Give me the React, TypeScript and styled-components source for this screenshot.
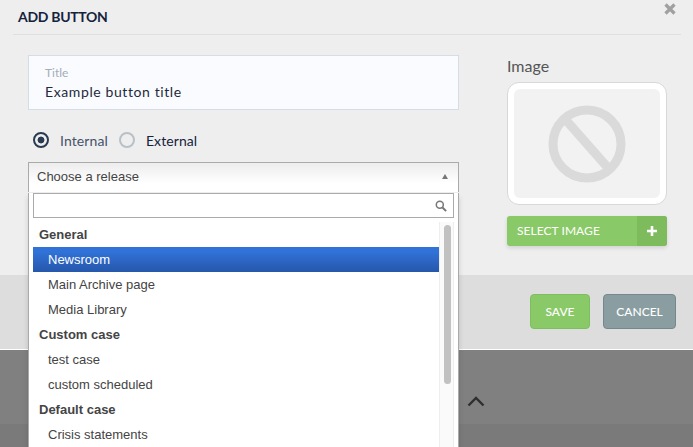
import React from 'react';
import styled, {createGlobalStyle} from 'styled-components';

type OptionType = {
  label: string
  kind: 'group' | 'item'
  active?: boolean
}

const options: Array<OptionType> = [
  {label: 'General', kind: 'group'},
  {label: 'Newsroom', kind: 'item', active: true},
  {label: 'Main Archive page', kind: 'item'},
  {label: 'Media Library', kind: 'item'},
  {label: 'Custom case', kind: 'group'},
  {label: 'test case', kind: 'item'},
  {label: 'custom scheduled', kind: 'item'},
  {label: 'Default case', kind: 'group'},
  {label: 'Crisis statements', kind: 'item'},
];

const App = () => {
  const optionsElements = options.map((o) => (
    <Option key={o.label} $kind={o.kind} $active={!!o.active}>{o.label}</Option>
  ));

  return (
    <Page>
      <GlobalStyle/>
      <Modal>
        <Header>
          <h1>ADD BUTTON</h1>
          <CloseIcon viewBox="0 0 12 12">
            <path d="M1.5 1.5l9 9M10.5 1.5l-9 9" stroke="#a0a0a0" strokeWidth="3.2" fill="none"/>
          </CloseIcon>
        </Header>
        <Body>
          <FormColumn>
            <TitleField>
              <small>Title</small>
              <span>Example button title</span>
            </TitleField>
            <RadioRow>
              <Radio $checked/>
              <RadioLabel $checked>Internal</RadioLabel>
              <Radio/>
              <RadioLabel>External</RadioLabel>
            </RadioRow>
            <SelectBox>
              <SelectHead>
                <span>Choose a release</span>
                <Caret/>
              </SelectHead>
              <Dropdown>
                <SearchBox>
                  <SearchIcon viewBox="0 0 12 12">
                    <circle cx="4.8" cy="4.8" r="3.5" stroke="#777" strokeWidth="1.5" fill="none"/>
                    <path d="M7.5 7.5l3.6 3.6" stroke="#777" strokeWidth="2" fill="none"/>
                  </SearchIcon>
                </SearchBox>
                <ListWrap>
                  <List>{optionsElements}</List>
                  <Scrollbar><Thumb/></Scrollbar>
                </ListWrap>
              </Dropdown>
            </SelectBox>
          </FormColumn>
          <ImageColumn>
            <ImageLabel>Image</ImageLabel>
            <ImageFrame>
              <ImageInner>
                <svg width="78" height="78" viewBox="0 0 78 78">
                  <circle cx="39" cy="39" r="34" stroke="#dadada" strokeWidth="9" fill="none"/>
                  <path d="M17 14l44 50" stroke="#dadada" strokeWidth="9" fill="none"/>
                </svg>
              </ImageInner>
            </ImageFrame>
            <SelectImageButton>
              <span>SELECT IMAGE</span>
              <PlusCell>
                <svg width="12" height="12" viewBox="0 0 12 12">
                  <path d="M6 1v10M1 6h10" stroke="#fff" strokeWidth="2.6" fill="none"/>
                </svg>
              </PlusCell>
            </SelectImageButton>
          </ImageColumn>
        </Body>
        <Footer>
          <FooterButton $variant="save">SAVE</FooterButton>
          <FooterButton $variant="cancel">CANCEL</FooterButton>
        </Footer>
      </Modal>
      <Backdrop>
        <svg width="18" height="11" viewBox="0 0 18 11">
          <path d="M1.5 9.5L9 2l7.5 7.5" stroke="#2f2f2f" strokeWidth="2.4" fill="none"/>
        </svg>
      </Backdrop>
      <BackdropBottom/>
    </Page>
  );
};

export default App;

const GlobalStyle = createGlobalStyle`
    html, body {
        margin: 0;
        padding: 0;
        overflow: hidden;
    }

    * {
        box-sizing: border-box;
    }
`

const Page = styled.div`
    width: 693px;
    height: 447px;
    overflow: hidden;
    font-family: Lato, "Liberation Sans", sans-serif;
    display: flex;
    flex-direction: column;
`

const Modal = styled.div`
    background: #eeeeee;
`

const Header = styled.div`
    height: 35px;
    margin: 0 12px 0 13px;
    padding: 0 5px;
    border-bottom: 1px solid #dfdfdf;
    display: flex;
    justify-content: space-between;

    h1 {
        margin: 8px 0 0;
        font-size: 14px;
        line-height: 17px;
        font-weight: 700;
        letter-spacing: -0.3px;
        color: #14233c;
    }
`

const CloseIcon = styled.svg`
    width: 12px;
    height: 12px;
    margin: 3px 0 0;
`

const Body = styled.div`
    height: 240px;
    padding: 20px 26px 0 28px;
    display: flex;
    justify-content: space-between;
`

const FormColumn = styled.div`
    width: 431px;
`

const TitleField = styled.div`
    height: 55px;
    padding: 10px 16px 0;
    background: #fafbff;
    border: 1px solid #d5dce6;
    display: flex;
    flex-direction: column;

    small {
        font-size: 12px;
        line-height: 14px;
        color: #a5acb8;
    }

    span {
        margin-top: 3px;
        font-size: 14px;
        line-height: 17px;
        letter-spacing: 0.6px;
        color: #1f2a3a;
    }
`

const RadioRow = styled.div`
    height: 18px;
    margin: 21px 0 0 5px;
    display: flex;
    align-items: center;
`

const Radio = styled.span<{ $checked?: boolean }>`
    width: 16px;
    height: 16px;
    border-radius: 50%;
    border: 2px solid ${p => p.$checked ? '#2a3a52' : '#b9c0c8'};
    background: ${p => p.$checked ? 'radial-gradient(circle, #2a3a52 0 3px, transparent 3.8px)' : 'transparent'};
`

const RadioLabel = styled.span<{ $checked?: boolean }>`
    margin: 1px ${p => p.$checked ? '11px' : '0'} 0 11px;
    font-size: 14px;
    letter-spacing: 0.1px;
    color: ${p => p.$checked ? '#44526a' : '#14233c'};
`

const SelectBox = styled.div`
    position: relative;
    margin-top: 13px;
    height: 30px;
    border: 1px solid #aaaaaa;
    border-bottom: none;
    background: linear-gradient(#eeeeee 5%, #ffffff 70%);
    z-index: 2;
`

const SelectHead = styled.div`
    height: 30px;
    padding: 0 10px 0 8px;
    display: flex;
    align-items: center;
    justify-content: space-between;
    font-family: "Liberation Sans", Arial, sans-serif;
    font-size: 13px;
    color: #444444;

    span {
        margin-top: -4px;
    }
`

const Caret = styled.i`
    width: 0;
    height: 0;
    margin-top: -4px;
    border-left: 3.5px solid transparent;
    border-right: 3.5px solid transparent;
    border-bottom: 5px solid #777777;
`

const Dropdown = styled.div`
    position: absolute;
    left: -1px;
    right: -1px;
    top: 30px;
    height: 260px;
    padding: 0 4px;
    background: #ffffff;
    border: 1px solid #aaaaaa;
    border-top: none;
    box-shadow: 0 4px 5px rgba(0, 0, 0, 0.15);
`

const SearchBox = styled.div`
    height: 25px;
    border: 1px solid #aaaaaa;
    background: #ffffff;
    display: flex;
    align-items: center;
    justify-content: flex-end;
    padding-right: 6px;
`

const SearchIcon = styled.svg`
    width: 12px;
    height: 12px;
`

const ListWrap = styled.div`
    margin-top: 4px;
    display: flex;
`

const List = styled.ul`
    flex: 1;
    margin: 0;
    padding: 0;
    list-style: none;
    font-family: "Liberation Sans", Arial, sans-serif;
    font-size: 13px;
`

const Option = styled.li<{ $kind: 'group' | 'item', $active: boolean }>`
    height: 25px;
    line-height: 26px;
    padding-left: ${p => p.$kind === 'group' ? '6px' : '15px'};
    font-weight: ${p => p.$kind === 'group' ? 700 : 400};
    color: ${p => p.$active ? '#ffffff' : '#444444'};
    background: ${p => p.$active ? 'linear-gradient(#3072d7 20%, #2a5fb8 75%, #2558ac)' : 'transparent'};
`

const Scrollbar = styled.div`
    width: 15px;
    height: 240px;
    padding: 3px 3px 0 4px;
    background: #fafafa;
    border-left: 1px solid #eeeeee;
    border-right: 1px solid #eeeeee;
`

const Thumb = styled.div`
    width: 7px;
    height: 159px;
    border-radius: 4px;
    background: #c1c1c1;
`

const ImageColumn = styled.div`
    width: 160px;
`

const ImageLabel = styled.div`
    height: 27px;
    font-size: 16px;
    line-height: 21px;
    color: #555555;
`

const ImageFrame = styled.div`
    height: 123px;
    padding: 6px;
    border: 1px solid #d8d8d8;
    border-radius: 12px;
    background: #ffffff;
`

const ImageInner = styled.div`
    height: 100%;
    border-radius: 6px;
    background: #f2f2f2;
    display: flex;
    align-items: center;
    justify-content: center;
`

const SelectImageButton = styled.div`
    height: 30px;
    margin-top: 11px;
    border-radius: 3px;
    overflow: hidden;
    background: #8ac968;
    box-shadow: 0 2px 4px rgba(0, 0, 0, 0.12);
    display: flex;
    justify-content: space-between;
    align-items: center;
    font-size: 12px;
    letter-spacing: 0.05px;
    color: #ffffff;

    span {
        margin-left: 10px;
        margin-top: -1px;
    }
`

const PlusCell = styled.div`
    width: 30px;
    height: 100%;
    background: #7dbb5d;
    display: flex;
    align-items: center;
    justify-content: center;
`

const Footer = styled.div`
    height: 75px;
    padding: 19px 17px 0 0;
    background: #dddddd;
    border-bottom: 1px solid #ffffff;
    display: flex;
    justify-content: flex-end;
    gap: 13px;
`

const FooterButton = styled.div<{ $variant: 'save' | 'cancel' }>`
    width: ${p => p.$variant === 'save' ? '60px' : '73px'};
    height: 35px;
    border-radius: 4px;
    border: 1px solid ${p => p.$variant === 'save' ? '#7dbf5c' : '#76888b'};
    background: ${p => p.$variant === 'save' ? '#8ac968' : '#8a9ea1'};
    color: #ffffff;
    font-size: 12px;
    font-weight: 500;
    display: flex;
    align-items: center;
    justify-content: center;
`

const Backdrop = styled.div`
    height: 74px;
    padding: 41px 0 0 467px;
    background: #808080;
`

const BackdropBottom = styled.div`
    flex: 1;
    background: #7a7a7a;
`
